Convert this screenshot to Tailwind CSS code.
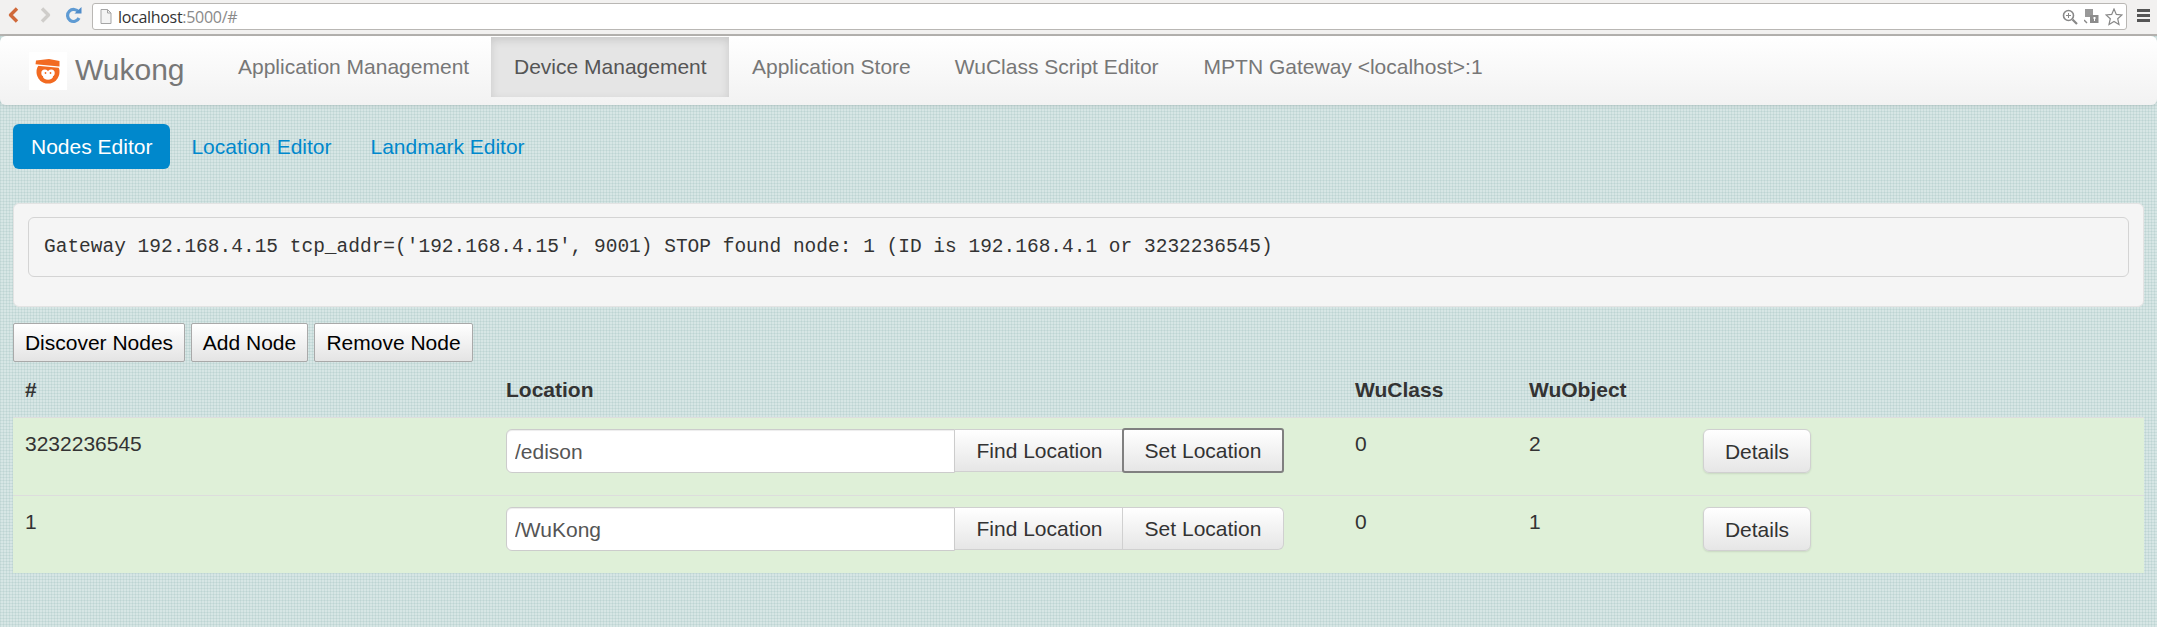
<!DOCTYPE html>
<html lang="en">
<head>
    <meta charset="UTF-8">
    <meta name="viewport" content="width=device-width, initial-scale=1.0">
    <title>Wukong</title>
    <script src="https://cdn.jsdelivr.net/npm/@tailwindcss/browser@4"></script>
</head>
<body class="h-[627px] overflow-hidden font-['Liberation_Sans',sans-serif] text-[21px] text-[#333] bg-[#d7e6e5] bg-[linear-gradient(90deg,rgba(110,160,155,0.13)_1px,transparent_1px),linear-gradient(rgba(110,160,155,0.13)_1px,transparent_1px)] bg-[size:3px_3px]">

    <!-- browser toolbar -->
    <div class="h-[36px] bg-[#f2f1f0] border-b-2 border-[#b5b3b0] flex items-start">
        <div class="w-[92px] h-[30px] flex items-center relative shrink-0">
            <svg class="ml-[8px] w-[11px] h-[16px]" viewBox="0 0 11 16"><path d="M9 1.5 2.5 8 9 14.5" fill="none" stroke="#d0693a" stroke-width="3.4" stroke-linejoin="round"/></svg>
            <svg class="ml-[21px] w-[11px] h-[16px]" viewBox="0 0 11 16"><path d="M2 1.5 8.5 8 2 14.5" fill="none" stroke="#cfcdca" stroke-width="3.4" stroke-linejoin="round"/></svg>
            <svg class="ml-[14px] w-[17px] h-[17px]" viewBox="0 0 17 17"><path d="M13.6 5.2A6 6 0 1 0 14 11" fill="none" stroke="#5f9bd3" stroke-width="3.2"/><path d="M9.5 6.5h7V0z" fill="#4f8cc9"/></svg>
        </div>
        <div class="mt-[3px] w-[2035px] h-[27px] bg-white border border-[#b9b7b4] rounded-[3px] flex items-center shrink-0">
            <svg class="ml-[7px] w-[12px] h-[15px]" viewBox="0 0 12 15"><path d="M1 .5h6.5l3.5 3.5v10.500H1z" fill="#f4f4f4" stroke="#a5a5a5"/><path d="M7.500.5V4H11" fill="none" stroke="#a5a5a5"/></svg>
            <span class="ml-[6px] font-['Open_Sans',sans-serif] text-[16px] tracking-[-0.3px] text-[#333]">localhost<span class="text-[#8a8a8a]">:5000/#</span></span>
            <div class="ml-auto mr-[3px] flex items-center gap-[6px]">
                <svg class="w-[16px] h-[16px]" viewBox="0 0 16 16"><circle cx="6.500" cy="6.500" r="5" fill="none" stroke="#888" stroke-width="1.600"/><path d="M10.500 10.500 15 15" stroke="#888" stroke-width="2.200"/><path d="M4 6.500h5M6.500 4v5" stroke="#888"/></svg>
                <svg class="w-[15px] h-[15px]" viewBox="0 0 15 15"><rect x="1" y="0" width="8" height="8" fill="#999"/><rect x="6" y="6" width="8.500" height="8" fill="#8c8c8c"/><path d="M9 9h3M10.500 8v4" stroke="#fff"/><path d="M0 11l3 3" stroke="#888" stroke-width="1.500"/></svg>
                <svg class="w-[18px] h-[18px]" viewBox="0 0 18 18"><path d="M9 1l2.300 5.400 5.700.5-4.300 3.800 1.300 5.800L9 13.500l-5 3 1.300-5.800L1 6.900l5.700-.5z" fill="#fff" stroke="#888" stroke-width="1.200"/></svg>
            </div>
        </div>
        <div class="ml-[10px] mt-[9px] w-[13px] flex flex-col gap-[2px]">
            <div class="h-[3px] bg-[#555]"></div>
            <div class="h-[3px] bg-[#555]"></div>
            <div class="h-[3px] bg-[#555]"></div>
        </div>
    </div>

    <!-- navbar -->
    <nav class="h-[69px] bg-gradient-to-b from-white to-[#f2f2f2] rounded-[6px] shadow-[0_1px_4px_rgba(0,0,0,0.1)] flex items-start">
        <div class="ml-[29px] mt-[16px] w-[38px] h-[38px] bg-white flex items-center justify-center shrink-0">
            <svg class="w-[26px] h-[26px]" viewBox="0 0 26 26">
                <circle cx="13" cy="14" r="11.500" fill="#f26a21"/>
                <path d="M0 7.500 26 10 26 0 0 0z" fill="#fff"/>
                <path d="M1 2.500 14 1 24.500 3 24.500 8.500 .5 6.200z" fill="#f26a21"/>
                <circle cx="9.800" cy="15" r="3.500" fill="#fff"/>
                <circle cx="16.200" cy="15" r="3.500" fill="#fff"/>
                <ellipse cx="13" cy="18.500" rx="5" ry="3.200" fill="#fff"/>
                <circle cx="10.500" cy="15" r=".9" fill="#f26a21"/>
                <circle cx="15.500" cy="15" r=".9" fill="#f26a21"/>
            </svg>
        </div>
        <a class="ml-[8px] mt-[14px] text-[30px] leading-[40px] text-[#777] w-[140px] shrink-0">Wukong</a>
        <a class="w-[276px] pl-[23px] h-[60px] mt-[1px] leading-[60px] text-[#777] whitespace-nowrap shrink-0">Application Management</a>
        <a class="w-[238px] pl-[23px] h-[60px] mt-[1px] leading-[60px] text-[#555] bg-[#e5e5e5] shadow-[inset_0_3px_8px_rgba(0,0,0,0.125)] whitespace-nowrap shrink-0">Device Management</a>
        <a class="pl-[23px] pr-[22px] h-[60px] mt-[1px] leading-[60px] text-[#777] whitespace-nowrap shrink-0">Application Store</a>
        <a class="pl-[22px] pr-[22px] h-[60px] mt-[1px] leading-[60px] text-[#777] whitespace-nowrap shrink-0">WuClass Script Editor</a>
        <a class="pl-[23px] h-[60px] mt-[1px] leading-[60px] text-[#777] whitespace-nowrap shrink-0">MPTN Gateway &lt;localhost&gt;:1</a>
    </nav>

    <div class="px-[13px]">
        <!-- tabs -->
        <div class="mt-[19px] flex gap-[3px]">
            <a class="h-[45px] px-[18px] leading-[45px] rounded-[6px] bg-[#0088cc] text-white">Nodes Editor</a>
            <a class="h-[45px] px-[18px] leading-[45px] text-[#0088cc]">Location Editor</a>
            <a class="h-[45px] px-[18px] leading-[45px] text-[#0088cc]">Landmark Editor</a>
        </div>

        <!-- gateway log -->
        <div class="mt-[34px] h-[104px] bg-[#f5f5f5] border border-[#e3e3e3] rounded-[6px] px-[14px] pt-[13px]">
            <pre class="h-[60px] border border-[#d4d4d4] rounded-[6px] px-[15px] font-['Liberation_Mono',monospace] text-[19.500px] leading-[58px] text-[#333]">Gateway 192.168.4.15 tcp_addr=('192.168.4.15', 9001) STOP found node: 1 (ID is 192.168.4.1 or 3232236545)</pre>
        </div>

        <!-- node actions -->
        <div class="mt-[16px] flex gap-[6px] text-black">
            <button class="h-[39px] w-[172px] border border-[#a9a9a9] rounded-[2px] bg-gradient-to-b from-white to-[#e4e4e4]">Discover Nodes</button>
            <button class="h-[39px] w-[117px] border border-[#a9a9a9] rounded-[2px] bg-gradient-to-b from-white to-[#e4e4e4]">Add Node</button>
            <button class="h-[39px] w-[159px] border border-[#a9a9a9] rounded-[2px] bg-gradient-to-b from-white to-[#e4e4e4]">Remove Node</button>
        </div>

        <!-- nodes table -->
        <table class="w-full table-fixed border-collapse">
            <colgroup>
                <col class="w-[481px]">
                <col class="w-[849px]">
                <col class="w-[174px]">
                <col class="w-[174px]">
                <col>
            </colgroup>
            <thead>
                <tr class="h-[55px] text-left font-bold">
                    <th class="px-[12px] pt-[1px]">#</th>
                    <th class="px-[12px] pt-[1px]">Location</th>
                    <th class="px-[12px] pt-[1px]">WuClass</th>
                    <th class="px-[12px] pt-[1px]">WuObject</th>
                    <th></th>
                </tr>
            </thead>
            <tbody>
                <tr class="h-[78px] bg-[#dff0d8] border-t border-[#ddd]">
                    <td class="px-[12px] align-top pt-[11px] leading-[30px]">3232236545</td>
                    <td class="px-[12px] align-top pt-[11px]">
                        <div class="flex">
                            <input value="/edison" class="w-[449px] h-[44px] bg-white border border-[#ccc] rounded-l-[6px] px-[8px] pt-[2px] text-[#555] shadow-[inset_0_1px_1px_rgba(0,0,0,0.075)]">
                            <button class="w-[168px] h-[43px] pt-[2px] pl-[2px] border border-[#d0d0d0] border-l-0 bg-gradient-to-b from-white to-[#e6e6e6]">Find Location</button>
                            <button class="w-[162px] h-[45px] pt-[2px] -mt-[1px] -ml-[1px] border-2 border-[#808080] rounded-[3px] bg-gradient-to-b from-white to-[#e6e6e6]">Set Location</button>
                        </div>
                    </td>
                    <td class="px-[12px] align-top pt-[11px] leading-[30px]">0</td>
                    <td class="px-[12px] align-top pt-[11px] leading-[30px]">2</td>
                    <td class="px-[12px] align-top pt-[11px]">
                        <button class="w-[108px] h-[44px] pt-[2px] border border-[#d0d0d0] rounded-[6px] bg-gradient-to-b from-white to-[#e6e6e6] shadow-[0_1px_2px_rgba(0,0,0,0.1)]">Details</button>
                    </td>
                </tr>
                <tr class="h-[78px] bg-[#dff0d8] border-t border-[#ddd]">
                    <td class="px-[12px] align-top pt-[11px] leading-[30px]">1</td>
                    <td class="px-[12px] align-top pt-[11px]">
                        <div class="flex">
                            <input value="/WuKong" class="w-[449px] h-[44px] bg-white border border-[#ccc] rounded-l-[6px] px-[8px] pt-[2px] text-[#555] shadow-[inset_0_1px_1px_rgba(0,0,0,0.075)]">
                            <button class="w-[168px] h-[43px] pt-[2px] pl-[2px] border border-[#d0d0d0] border-l-0 bg-gradient-to-b from-white to-[#e6e6e6]">Find Location</button>
                            <button class="w-[161px] h-[43px] pt-[2px] border border-[#d0d0d0] border-l-0 rounded-r-[6px] bg-gradient-to-b from-white to-[#e6e6e6]">Set Location</button>
                        </div>
                    </td>
                    <td class="px-[12px] align-top pt-[11px] leading-[30px]">0</td>
                    <td class="px-[12px] align-top pt-[11px] leading-[30px]">1</td>
                    <td class="px-[12px] align-top pt-[11px]">
                        <button class="w-[108px] h-[44px] pt-[2px] border border-[#d0d0d0] rounded-[6px] bg-gradient-to-b from-white to-[#e6e6e6] shadow-[0_1px_2px_rgba(0,0,0,0.1)]">Details</button>
                    </td>
                </tr>
            </tbody>
        </table>
    </div>
</body>
</html>
